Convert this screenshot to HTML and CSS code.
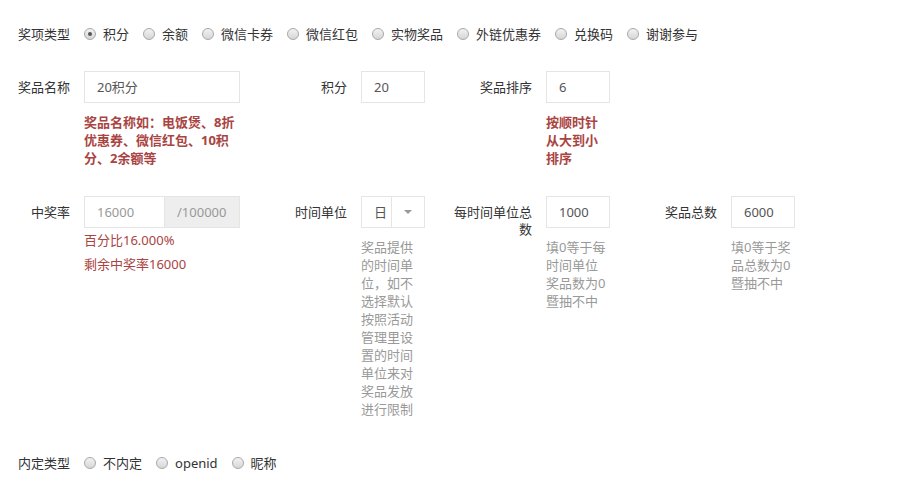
FILE: index.html
```html
<!DOCTYPE html>
<html lang="zh-CN">
<head>
<meta charset="utf-8">
<title>奖项设置</title>
<link rel="stylesheet" href="styles.css">
</head>
<body>
<div class="form">
  <div class="row row-radio">
    <label class="lbl lbl-first">奖项类型</label>
    <div class="radios">
      <span class="radio checked"></span><span class="rtxt">积分</span>
      <span class="radio"></span><span class="rtxt">余额</span>
      <span class="radio"></span><span class="rtxt">微信卡券</span>
      <span class="radio"></span><span class="rtxt">微信红包</span>
      <span class="radio"></span><span class="rtxt">实物奖品</span>
      <span class="radio"></span><span class="rtxt">外链优惠券</span>
      <span class="radio"></span><span class="rtxt">兑换码</span>
      <span class="radio"></span><span class="rtxt">谢谢参与</span>
    </div>
  </div>

  <div class="row row-fields row2">
    <div class="field first">
      <label class="lbl lbl-first">奖品名称</label>
      <div class="ctl w156">
        <div class="input">20积分</div>
        <div class="help red-bold">奖品名称如：电饭煲、8折优惠券、微信红包、10积分、2余额等</div>
      </div>
    </div>
    <div class="field">
      <label class="lbl">积分</label>
      <div class="ctl w64">
        <div class="input">20</div>
      </div>
    </div>
    <div class="field">
      <label class="lbl">奖品排序</label>
      <div class="ctl w64">
        <div class="input">6</div>
        <div class="help red-bold">按顺时针从大到小排序</div>
      </div>
    </div>
  </div>

  <div class="row row-fields row3">
    <div class="field first">
      <label class="lbl lbl-first">中奖率</label>
      <div class="ctl w156">
        <div class="input-group">
          <div class="input grp-input muted">16000</div>
          <div class="addon">/100000</div>
        </div>
        <div class="rate red">百分比16.000%</div>
        <div class="rate rate2 red">剩余中奖率16000</div>
      </div>
    </div>
    <div class="field">
      <label class="lbl">时间单位</label>
      <div class="ctl w64">
        <div class="select"><span class="sel-val">日</span><span class="sel-btn"><span class="caret"></span></span></div>
        <div class="help gray">奖品提供的时间单位，如不选择默认按照活动管理里设置的时间单位来对奖品发放进行限制</div>
      </div>
    </div>
    <div class="field">
      <label class="lbl">每时间单位总数</label>
      <div class="ctl w64">
        <div class="input">1000</div>
        <div class="help gray">填0等于每时间单位奖品数为0暨抽不中</div>
      </div>
    </div>
    <div class="field">
      <label class="lbl">奖品总数</label>
      <div class="ctl w64">
        <div class="input">6000</div>
        <div class="help gray">填0等于奖品总数为0暨抽不中</div>
      </div>
    </div>
  </div>

  <div class="row row-radio row4">
    <label class="lbl lbl-first">内定类型</label>
    <div class="radios">
      <span class="radio"></span><span class="rtxt">不内定</span>
      <span class="radio"></span><span class="rtxt">openid</span>
      <span class="radio"></span><span class="rtxt">昵称</span>
    </div>
  </div>
</div>
</body>
</html>
```

FILE: styles.css
```css
html, body {
  margin: 0;
  padding: 0;
  background: #ffffff;
}

body {
  font-family: "Noto Sans", "Noto Sans CJK SC", sans-serif;
  font-size: 13px;
  color: #333333;
}

.form {
  padding-top: 18px;
}

.row {
  display: flex;
  align-items: flex-start;
}

.row-radio {
  height: 32px;
  align-items: center;
  margin-bottom: 21px;
}

.row2 {
  margin-bottom: 29px;
}

.row3 {
  margin-bottom: 29px;
}

.row4 {
  margin-bottom: 0;
}

.lbl {
  display: block;
  flex: none;
  width: 80px;
  text-align: right;
  line-height: 17px;
  padding-top: 8px;
  margin-right: 14px;
  box-sizing: border-box;
}

.row-radio .lbl {
  padding-top: 0;
}

.lbl-first {
  width: 70px;
}

.field {
  display: flex;
  align-items: flex-start;
  margin-left: 27px;
}

.field.first {
  margin-left: 0;
}

.ctl {
  flex: none;
}

.w156 {
  width: 156px;
}

.w64 {
  width: 64px;
}

.input {
  height: 32px;
  box-sizing: border-box;
  border: 1px solid #e5e5e5;
  padding: 0 12px;
  line-height: 30px;
  color: #555555;
  white-space: nowrap;
  overflow: hidden;
}

.muted {
  color: #999999;
}

.input-group {
  display: flex;
  height: 32px;
}

.grp-input {
  width: 81px;
  flex: none;
}

.addon {
  flex: 1;
  box-sizing: border-box;
  height: 32px;
  line-height: 30px;
  padding: 0 12px;
  background: #eeeeee;
  border: 1px solid #e5e5e5;
  border-left: none;
  color: #999999;
}

.select {
  display: flex;
  height: 32px;
  box-sizing: border-box;
  border: 1px solid #e5e5e5;
  color: #555555;
}

.sel-val {
  width: 30px;
  padding-left: 12px;
  box-sizing: border-box;
  line-height: 30px;
  border-right: 1px solid #e5e5e5;
}

.sel-btn {
  flex: 1;
  display: flex;
  align-items: center;
  justify-content: center;
}

.caret {
  width: 0;
  height: 0;
  border-left: 4px solid transparent;
  border-right: 4px solid transparent;
  border-top: 4px solid #999999;
}

.help {
  margin-top: 10px;
  line-height: 18px;
}

.red-bold {
  color: #a94442;
  font-weight: bold;
}

.red {
  color: #a94442;
}

.gray {
  color: #999999;
}

.rate {
  margin-top: 3px;
  line-height: 18px;
}

.rate2 {
  margin-top: 6px;
}

.radios {
  display: flex;
  align-items: center;
}

.radio {
  display: inline-block;
  width: 12px;
  height: 12px;
  box-sizing: border-box;
  border-radius: 50%;
  border: 1px solid #a8a8a8;
  background: linear-gradient(#f2f2f2, #d6d6d6);
  margin-right: 7px;
  position: relative;
  flex: none;
}

.radio.checked::after {
  content: "";
  position: absolute;
  left: 3px;
  top: 3px;
  width: 4px;
  height: 4px;
  border-radius: 50%;
  background: #555555;
}

.rtxt {
  margin-right: 14px;
  line-height: 17px;
}
```
